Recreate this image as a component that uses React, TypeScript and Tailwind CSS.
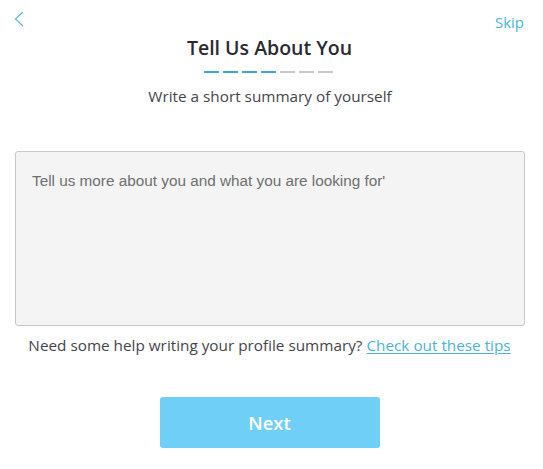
import React, { useState } from "react";

export default function App() {
  const [summary, setSummary] = useState("");
  const steps = [true, true, true, true, false, false, false];

  return (
    <div className="w-[543px] h-[469px] bg-white font-['Open_Sans','Noto_Sans',sans-serif] text-[#3a3a42] flex flex-col">
      {/* Top bar */}
      <div className="flex justify-between items-start pl-[13px] pr-[19px] pt-[11px] h-[36px]">
        <button type="button" className="w-[14px] h-[16px] text-[#5ab8e0]">
          <svg width="12" height="16" viewBox="0 0 12 16" fill="none">
            <path d="M10 1 L2.5 8 L10 15" stroke="currentColor" strokeWidth="1.2" />
          </svg>
        </button>
        <button type="button" className="text-[15px] leading-none mt-[4px] text-[#4ab4d8]">Skip</button>
      </div>

      {/* Heading */}
      <h1 className="text-center text-[19.5px] font-semibold leading-[26px] -mt-[1px] pr-[4px] text-[#2b2a33]">Tell Us About You</h1>
      <div className="flex justify-center gap-[4px] mt-[10px] pr-[6px]">
        {steps.map((done, i) => (
          <span key={i} className={`w-[15px] h-[2px] ${done ? "bg-[#3aa9d6]" : "bg-[#c8c8c8]"}`} />
        ))}
      </div>
      <p className="text-center text-[15.3px] leading-[20px] mt-[13px] pr-[3px] text-[#45444c]">Write a short summary of yourself</p>

      {/* Summary box */}
      <div className="px-[15px] mt-[45px]">
        <textarea
          value={summary}
          onChange={(e) => setSummary(e.target.value)}
          placeholder="Tell us more about you and what you are looking for'"
          className="block w-[510px] h-[175px] resize-none rounded-[3px] border border-[#c9c9c9] bg-[#f4f4f4] px-[16px] py-[18px] font-['Liberation_Sans',Arial,sans-serif] text-[15.3px] leading-[22px] text-[#333] placeholder:text-[#6f6f6f] outline-none"
        />
      </div>
      <p className="text-center text-[15.3px] leading-[20px] mt-[9px] pr-[4px] text-[#45444c]">
        Need some help writing your profile summary?{" "}
        <a href="#" className="text-[#4ab4d8] underline underline-offset-2">Check out these tips</a>
      </p>

      {/* Action */}
      <div className="flex justify-center mt-[42px] pr-[4px]">
        <button
          type="button"
          className="w-[220px] h-[51px] rounded-[3px] bg-[#6fcff6] text-white text-[18.5px] font-semibold"
        >
          Next
        </button>
      </div>
    </div>
  );
}
